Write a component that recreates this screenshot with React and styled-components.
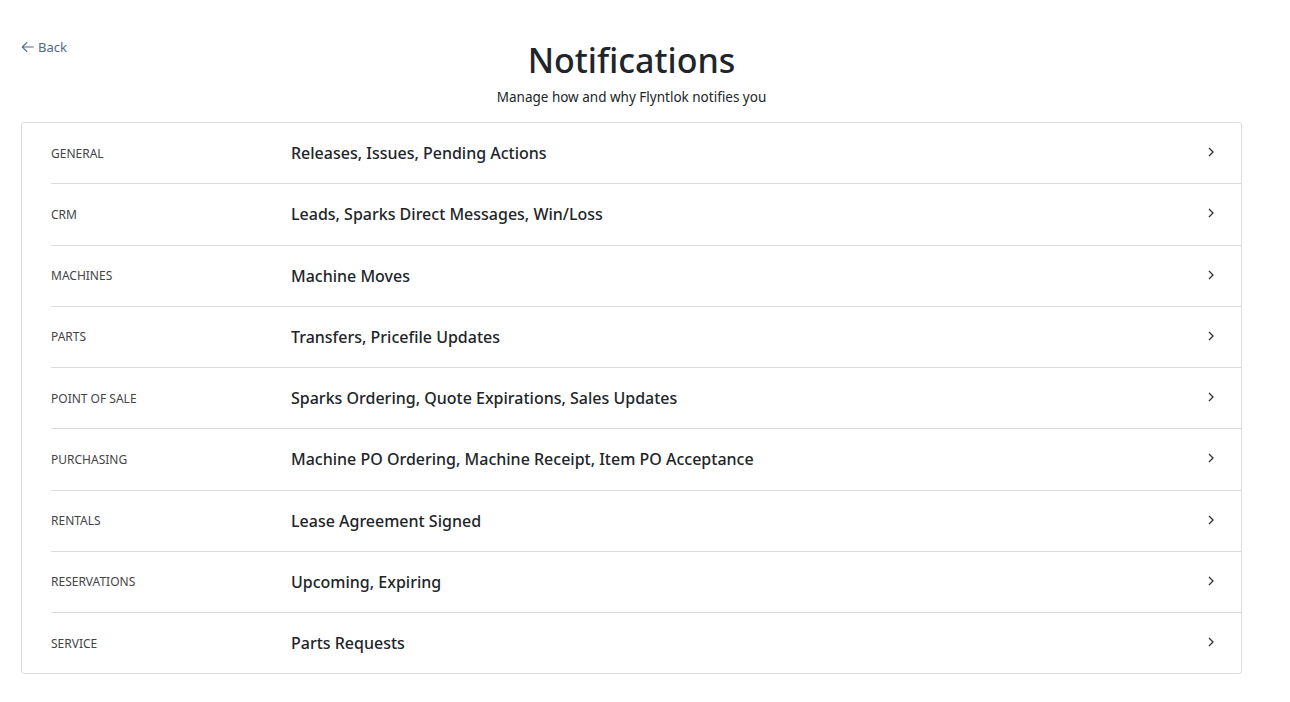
import React from 'react'
import styled, { createGlobalStyle } from 'styled-components'

const GlobalStyle = createGlobalStyle`
  body {
    margin: 0;
    background: #fff;
    font-family: "Noto Sans", "Open Sans", sans-serif;
    color: #212529;
  }
`

const Page = styled.div`
  padding: 38px 48px 0 21px;
`

const Header = styled.div`
  position: relative;
  text-align: center;
  margin-bottom: 16px;
`

const BackLink = styled.a`
  position: absolute;
  left: 0;
  top: 0;
  display: flex;
  align-items: center;
  gap: 3px;
  font-size: 13px;
  color: #4f6b85;
  text-decoration: none;
  cursor: pointer;
`

const Title = styled.h1`
  margin: 0;
  font-size: 34px;
  font-weight: 500;
  line-height: 44px;
  color: #212529;
`

const Subtitle = styled.div`
  margin-top: 6px;
  font-size: 13.5px;
  color: #212529;
`

const Card = styled.div`
  border: 1px solid #dcdcdc;
  border-radius: 3px;
  padding-left: 29px;
`

const Row = styled.div`
  display: flex;
  align-items: center;
  height: 60.25px;
  border-bottom: ${p => (p.$last ? 'none' : '1px solid #dcdcdc')};
  cursor: pointer;
`

const Label = styled.div`
  width: 240px;
  flex-shrink: 0;
  font-size: 12px;
  color: #444;
  text-transform: uppercase;
`

const Desc = styled.div`
  flex: 1;
  font-size: 16px;
  font-weight: 500;
  color: #212529;
`

const Chevron = styled.div`
  width: 33px;
  display: flex;
  justify-content: flex-start;
  margin-top: -2px;
`

const rows = [
  ['General', 'Releases, Issues, Pending Actions'],
  ['CRM', 'Leads, Sparks Direct Messages, Win/Loss'],
  ['Machines', 'Machine Moves'],
  ['Parts', 'Transfers, Pricefile Updates'],
  ['Point of Sale', 'Sparks Ordering, Quote Expirations, Sales Updates'],
  ['Purchasing', 'Machine PO Ordering, Machine Receipt, Item PO Acceptance'],
  ['Rentals', 'Lease Agreement Signed'],
  ['Reservations', 'Upcoming, Expiring'],
  ['Service', 'Parts Requests'],
]

const ArrowLeft = () => (
  <svg width="14" height="14" viewBox="0 0 16 16" fill="none" stroke="currentColor" strokeWidth="1.3">
    <path d="M14.5 8H2M7 2.5L1.5 8 7 13.5" />
  </svg>
)

const ChevronRight = () => (
  <svg width="6" height="10" viewBox="0 0 6 10" fill="none" stroke="#333" strokeWidth="1.3">
    <path d="M1 1l4 4-4 4" />
  </svg>
)

export default function App () {
  return (
    <>
      <GlobalStyle />
      <Page>
        <Header>
          <BackLink>
            <ArrowLeft />
            Back
          </BackLink>
          <Title>Notifications</Title>
          <Subtitle>Manage how and why Flyntlok notifies you</Subtitle>
        </Header>
        <Card>
          {rows.map(([label, desc], i) => (
            <Row key={label} $last={i === rows.length - 1}>
              <Label>{label}</Label>
              <Desc>{desc}</Desc>
              <Chevron>
                <ChevronRight />
              </Chevron>
            </Row>
          ))}
        </Card>
      </Page>
    </>
  )
}
